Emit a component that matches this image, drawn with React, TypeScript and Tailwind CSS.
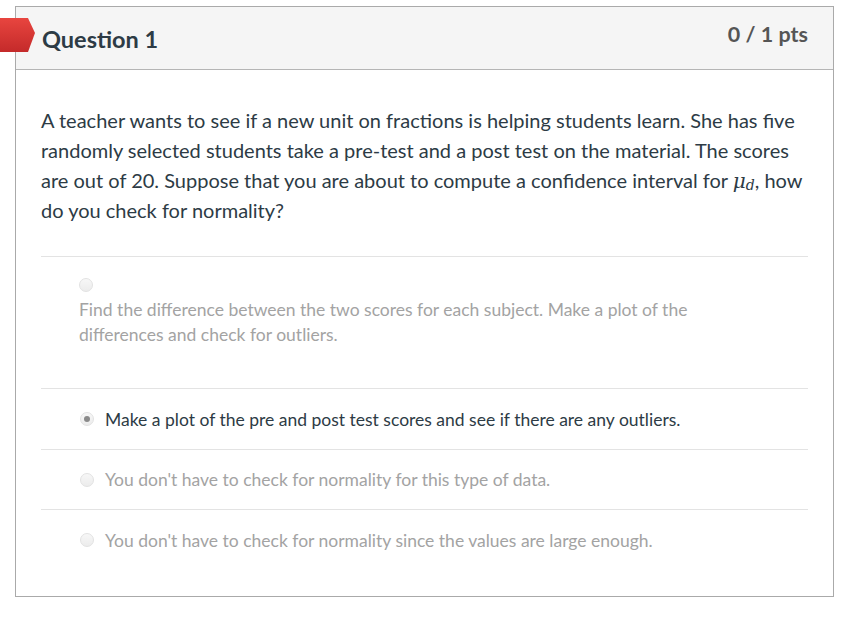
const answers = [
  { text: "Make a plot of the pre and post test scores and see if there are any outliers.", selected: true, h: "h-[61px]" },
  { text: "You don't have to check for normality for this type of data.", selected: false, h: "h-[60px]" },
  { text: "You don't have to check for normality since the values are large enough.", selected: false, h: "h-[60px]" },
];

function Radio({ checked }: { checked?: boolean }) {
  return (
    <span className="w-[14px] h-[14px] shrink-0 rounded-full border border-[#e2e2e2] bg-gradient-to-b from-[#f7f7f7] to-[#ececec] flex items-center justify-center">
      {checked && <span className="w-[6px] h-[6px] rounded-full bg-[#8a8a8a]" />}
    </span>
  );
}

export default function App() {
  return (
    <div className="relative w-[860px] h-[624px] bg-white pt-[6px] pl-[15px] font-['Lato','Liberation_Sans',sans-serif]">
      <div className="w-[819px] h-[591px] border border-[#aaaaaa] bg-white">
        {/* header */}
        <div className="h-[63px] bg-[#f5f5f5] border-b border-[#b5b5b5] flex items-start justify-between pl-[26px] pr-[25px]">
          <h2 className="mt-[17px] text-[23.5px] leading-[30px] font-bold text-[#2d3b45]">Question 1</h2>
          <span className="mt-[13px] text-[21.5px] leading-[28px] font-bold text-[#555555]">0 / 1 pts</span>
        </div>

        <div className="px-[25px] pt-[35px]">
          <p className="text-[20px] leading-[30px] text-[#2d3b45]">
            A teacher wants to see if a new unit on fractions is helping students learn. She has five randomly
            selected students take a pre-test and a post test on the material. The scores are out of 20. Suppose
            that you are about to compute a confidence interval for{" "}
            <span className="font-['DejaVu_Serif',serif] italic text-[20px] leading-none">
              μ<span className="inline-block text-[14px] leading-none translate-y-[2px]">d</span>
            </span>
            , how do you check for normality?
          </p>

          <div className="mt-[31px] border-t border-[#e3e3e3]">
            <div className="pl-[38px] pt-[21px] pb-[41px] border-b border-[#e3e3e3]">
              <Radio />
              <p className="mt-[5px] w-[625px] text-[17.5px] leading-[25px] text-[#a3a3a3]">
                Find the difference between the two scores for each subject. Make a plot of the differences and check
                for outliers.
              </p>
            </div>
            {answers.map((a, i) => (
              <div
                key={a.text}
                className={`pl-[39px] ${a.h} flex items-center gap-[11px] ${i < answers.length - 1 ? "border-b border-[#e3e3e3]" : ""}`}
              >
                <Radio checked={a.selected} />
                <span className={`text-[17.5px] leading-[25px] ${a.selected ? "text-[#2d3b45]" : "text-[#a3a3a3]"}`}>
                  {a.text}
                </span>
              </div>
            ))}
          </div>
        </div>
      </div>

      {/* red question flag */}
      <svg className="absolute left-0 top-[18px]" width="36" height="35" viewBox="0 0 36 35">
        <defs>
          <linearGradient id="flag" x1="0" y1="0" x2="0" y2="1">
            <stop offset="0" stopColor="#e8453f" />
            <stop offset="1" stopColor="#c42a2a" />
          </linearGradient>
        </defs>
        <polygon points="0,0 28,0 35,15 28,34 0,34" fill="url(#flag)" />
      </svg>
    </div>
  );
}
